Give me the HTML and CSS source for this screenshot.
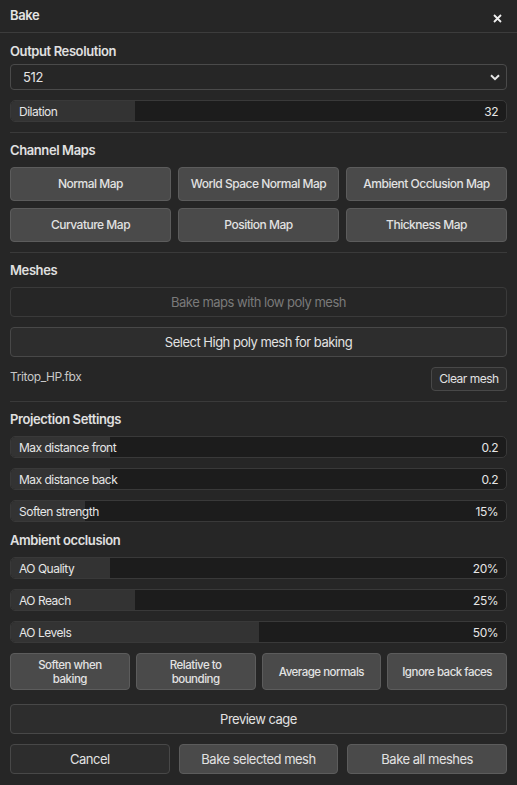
FILE: index.html
```html
<!DOCTYPE html>
<html lang="en">
<head>
    <meta charset="UTF-8">
    <meta name="viewport" content="width=device-width, initial-scale=1.0">
    <title>Bake</title>
    <link rel="stylesheet" href="styles.css">
</head>
<body>
    <div class="panel">
        <div class="panel-header">
            <span class="panel-title">Bake</span>
            <svg class="close" width="9" height="9" viewBox="0 0 9 9"><path d="M1 1 L8 8 M8 1 L1 8" stroke="#f0f0f0" stroke-width="1.8"/></svg>
        </div>

        <!-- Output -->
        <div class="section">
            <div class="section-title first">Output Resolution</div>
            <div class="select">
                <span>512</span>
                <svg width="10" height="7" viewBox="0 0 10 7"><path d="M1 1.2 L5 5.2 L9 1.2" fill="none" stroke="#e6e6e6" stroke-width="2"/></svg>
            </div>
            <div class="slider"><div class="slider-fill" style="width:25%"></div><span class="slider-label">Dilation</span><span class="slider-value">32</span></div>
        </div>

        <!-- Channel maps -->
        <div class="section">
            <div class="section-title">Channel Maps</div>
            <div class="grid-3">
                <button class="btn btn-solid tall">Normal Map</button>
                <button class="btn btn-solid tall">World Space Normal Map</button>
                <button class="btn btn-solid tall">Ambient Occlusion Map</button>
                <button class="btn btn-solid tall">Curvature Map</button>
                <button class="btn btn-solid tall">Position Map</button>
                <button class="btn btn-solid tall">Thickness Map</button>
            </div>
        </div>

        <!-- Meshes -->
        <div class="section">
            <div class="section-title">Meshes</div>
            <button class="btn btn-disabled wide">Bake maps with low poly mesh</button>
            <button class="btn btn-dark wide">Select High poly mesh for baking</button>
            <div class="mesh-row">
                <span class="mesh-name">Tritop_HP.fbx</span>
                <button class="btn btn-dark small">Clear mesh</button>
            </div>
        </div>

        <!-- Projection -->
        <div class="section last">
            <div class="section-title">Projection Settings</div>
            <div class="slider"><div class="slider-fill" style="width:20%"></div><span class="slider-label">Max distance front</span><span class="slider-value">0.2</span></div>
            <div class="slider"><div class="slider-fill" style="width:20%"></div><span class="slider-label">Max distance back</span><span class="slider-value">0.2</span></div>
            <div class="slider"><div class="slider-fill" style="width:15%"></div><span class="slider-label">Soften strength</span><span class="slider-value">15%</span></div>

            <div class="section-title sub">Ambient occlusion</div>
            <div class="slider"><div class="slider-fill" style="width:20%"></div><span class="slider-label">AO Quality</span><span class="slider-value">20%</span></div>
            <div class="slider"><div class="slider-fill" style="width:25%"></div><span class="slider-label">AO Reach</span><span class="slider-value">25%</span></div>
            <div class="slider"><div class="slider-fill" style="width:50%"></div><span class="slider-label">AO Levels</span><span class="slider-value">50%</span></div>

            <div class="grid-4">
                <button class="btn btn-solid toggle"><span>Soften when</span><span>baking</span></button>
                <button class="btn btn-solid toggle"><span>Relative to</span><span>bounding</span></button>
                <button class="btn btn-solid toggle">Average normals</button>
                <button class="btn btn-solid toggle">Ignore back faces</button>
            </div>

            <button class="btn btn-dark wide preview">Preview cage</button>

            <div class="footer">
                <button class="btn btn-dark wide">Cancel</button>
                <button class="btn btn-solid wide">Bake selected mesh</button>
                <button class="btn btn-solid wide">Bake all meshes</button>
            </div>
        </div>
    </div>
</body>
</html>
```

FILE: styles.css
```css
* {
    box-sizing: border-box;
}
body {
    margin: 0;
    background-color: #262626;
    color: #e4e4e4;
    font-family: Inter, "Noto Sans", sans-serif;
    font-size: 12px;
    letter-spacing: -0.4px;
}
.panel {
    width: 517px;
    min-height: 785px;
    background-color: #262626;
}
.panel-header {
    height: 33px;
    padding: 0 10px;
    display: flex;
    align-items: center;
    justify-content: space-between;
    border-bottom: 1px solid #3c3c3c;
}
.panel-title {
    font-size: 13px;
    font-weight: 600;
    margin-top: -3px;
}
.close {
    margin-top: 4px;
    margin-right: 5px;
}
.section {
    margin: 0 10px;
    padding: 9px 0 10px;
    border-bottom: 1px solid #3a3a3a;
}
.section.last {
    border-bottom: none;
    padding-bottom: 0;
}
.section-title {
    font-size: 13px;
    font-weight: 600;
    color: #e0e0e0;
    height: 17px;
    line-height: 17px;
    margin-bottom: 8px;
}
.section-title.first {
    margin-top: 1px;
    margin-bottom: 4px;
}
.section-title.sub {
    margin-top: 1px;
}
.select {
    height: 26px;
    border: 1px solid #4a4a4a;
    border-radius: 4px;
    padding: 0 6px 0 12px;
    display: flex;
    align-items: center;
    justify-content: space-between;
    font-size: 13px;
    margin-bottom: 10px;
}
.slider {
    position: relative;
    height: 22px;
    background-color: #1c1c1c;
    border: 1px solid #393939;
    border-radius: 5px;
    overflow: hidden;
    display: flex;
    align-items: center;
    justify-content: space-between;
    padding: 0 8px;
    margin-bottom: 10px;
    font-size: 12px;
    letter-spacing: -0.5px;
}
.section > .slider:last-child {
    margin-bottom: 0;
}
.slider-fill {
    position: absolute;
    left: 0;
    top: 0;
    bottom: 0;
    background-color: #333333;
}
.slider-label,
.slider-value {
    position: relative;
    color: #e6e6e6;
}
.btn {
    font-family: inherit;
    font-size: 12px;
    font-weight: 500;
    letter-spacing: -0.5px;
    color: #e2e2e2;
    border-radius: 4px;
    padding: 0;
    cursor: pointer;
    display: flex;
    flex-direction: column;
    align-items: center;
    justify-content: center;
    text-align: center;
    line-height: 14px;
}
.btn-solid {
    background-color: #4a4a4a;
    border: 1px solid #5c5c5c;
}
.btn-dark {
    background-color: #2d2d2d;
    border: 1px solid #484848;
}
.btn-disabled {
    background-color: #262626;
    border: 1px solid #3a3a3a;
    color: #7a7a7a;
}
.grid-3 {
    display: grid;
    grid-template-columns: repeat(3, 1fr);
    gap: 7px;
}
.tall {
    height: 34px;
}
.wide {
    width: 100%;
    height: 30px;
    font-size: 13px;
    font-weight: 400;
}
.btn-disabled.wide {
    margin-bottom: 10px;
}
.mesh-row {
    display: flex;
    justify-content: space-between;
    align-items: center;
    margin-top: 10px;
}
.mesh-name {
    color: #c8c8c8;
    margin-top: -6px;
}
.small {
    width: 76px;
    height: 24px;
    font-weight: 400;
}
.grid-4 {
    display: grid;
    grid-template-columns: repeat(4, 1fr);
    gap: 6px;
}
.toggle {
    height: 37px;
    font-size: 11.5px;
}
.preview {
    margin-top: 14px;
}
.footer {
    display: grid;
    grid-template-columns: repeat(3, 1fr);
    gap: 9px;
    margin-top: 10px;
}
```
